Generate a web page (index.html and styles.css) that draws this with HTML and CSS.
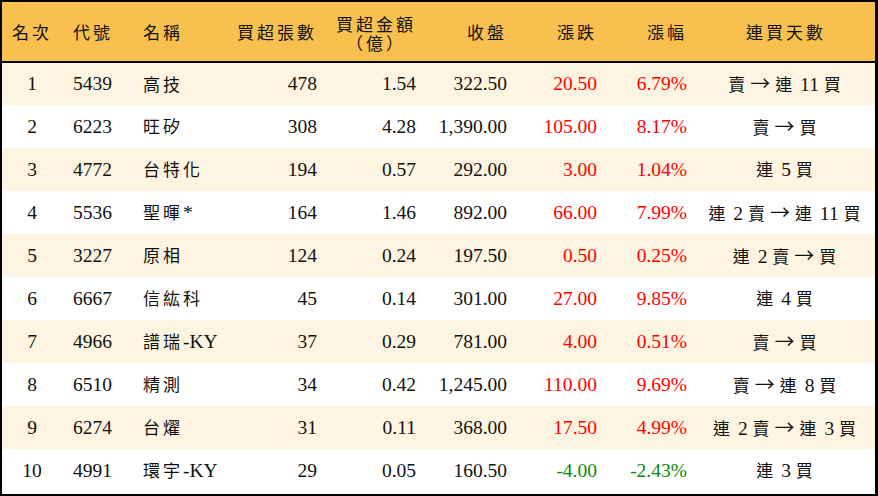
FILE: index.html
```html
<!DOCTYPE html>
<html lang="zh-Hant">
<head>
<meta charset="utf-8">
<title>買超排行</title>
<link rel="stylesheet" href="styles.css">
</head>
<body>
<div class="wrap">
<table class="rank">
<colgroup>
<col class="w1"><col class="w2"><col class="w3"><col class="w4"><col class="w5"><col class="w6"><col class="w7"><col class="w8"><col class="w9">
</colgroup>
<thead>
<tr>
<th class="ctr">名次</th>
<th class="lft">代號</th>
<th class="lft">名稱</th>
<th class="rgt">買超張數</th>
<th class="rgt"><span class="stack"><span class="ln">買超金額</span><span class="ln">（億）</span></span></th>
<th class="rgt">收盤</th>
<th class="rgt">漲跌</th>
<th class="rgt">漲幅</th>
<th class="ctr">連買天數</th>
</tr>
</thead>
<tbody>
<tr><td class="ctr">1</td><td class="lft">5439</td><td class="lft"><span class="z">高技</span></td><td class="rgt">478</td><td class="rgt">1.54</td><td class="rgt">322.50</td><td class="rgt up">20.50</td><td class="rgt up">6.79%</td><td class="ctr"><span class="z">賣</span><span class="arr">→</span><span class="z">連</span> 11 <span class="z">買</span></td></tr>
<tr><td class="ctr">2</td><td class="lft">6223</td><td class="lft"><span class="z">旺矽</span></td><td class="rgt">308</td><td class="rgt">4.28</td><td class="rgt">1,390.00</td><td class="rgt up">105.00</td><td class="rgt up">8.17%</td><td class="ctr"><span class="z">賣</span><span class="arr">→</span><span class="z">買</span></td></tr>
<tr><td class="ctr">3</td><td class="lft">4772</td><td class="lft"><span class="z">台特化</span></td><td class="rgt">194</td><td class="rgt">0.57</td><td class="rgt">292.00</td><td class="rgt up">3.00</td><td class="rgt up">1.04%</td><td class="ctr"><span class="z">連</span> 5 <span class="z">買</span></td></tr>
<tr><td class="ctr">4</td><td class="lft">5536</td><td class="lft"><span class="z">聖暉</span>*</td><td class="rgt">164</td><td class="rgt">1.46</td><td class="rgt">892.00</td><td class="rgt up">66.00</td><td class="rgt up">7.99%</td><td class="ctr"><span class="z">連</span> 2 <span class="z">賣</span><span class="arr">→</span><span class="z">連</span> 11 <span class="z">買</span></td></tr>
<tr><td class="ctr">5</td><td class="lft">3227</td><td class="lft"><span class="z">原相</span></td><td class="rgt">124</td><td class="rgt">0.24</td><td class="rgt">197.50</td><td class="rgt up">0.50</td><td class="rgt up">0.25%</td><td class="ctr"><span class="z">連</span> 2 <span class="z">賣</span><span class="arr">→</span><span class="z">買</span></td></tr>
<tr><td class="ctr">6</td><td class="lft">6667</td><td class="lft"><span class="z">信紘科</span></td><td class="rgt">45</td><td class="rgt">0.14</td><td class="rgt">301.00</td><td class="rgt up">27.00</td><td class="rgt up">9.85%</td><td class="ctr"><span class="z">連</span> 4 <span class="z">買</span></td></tr>
<tr><td class="ctr">7</td><td class="lft">4966</td><td class="lft"><span class="z">譜瑞</span>-KY</td><td class="rgt">37</td><td class="rgt">0.29</td><td class="rgt">781.00</td><td class="rgt up">4.00</td><td class="rgt up">0.51%</td><td class="ctr"><span class="z">賣</span><span class="arr">→</span><span class="z">買</span></td></tr>
<tr><td class="ctr">8</td><td class="lft">6510</td><td class="lft"><span class="z">精測</span></td><td class="rgt">34</td><td class="rgt">0.42</td><td class="rgt">1,245.00</td><td class="rgt up">110.00</td><td class="rgt up">9.69%</td><td class="ctr"><span class="z">賣</span><span class="arr">→</span><span class="z">連</span> 8 <span class="z">買</span></td></tr>
<tr><td class="ctr">9</td><td class="lft">6274</td><td class="lft"><span class="z">台燿</span></td><td class="rgt">31</td><td class="rgt">0.11</td><td class="rgt">368.00</td><td class="rgt up">17.50</td><td class="rgt up">4.99%</td><td class="ctr"><span class="z">連</span> 2 <span class="z">賣</span><span class="arr">→</span><span class="z">連</span> 3 <span class="z">買</span></td></tr>
<tr><td class="ctr">10</td><td class="lft">4991</td><td class="lft"><span class="z">環宇</span>-KY</td><td class="rgt">29</td><td class="rgt">0.05</td><td class="rgt">160.50</td><td class="rgt down">-4.00</td><td class="rgt down">-2.43%</td><td class="ctr"><span class="z">連</span> 3 <span class="z">買</span></td></tr>
</tbody>
</table>
</div>
</body>
</html>
```
FILE: styles.css
```css
html, body {
  margin: 0;
  padding: 0;
  background: #fff;
}

.wrap {
  width: 878px;
  height: 496px;
  box-sizing: border-box;
  border-style: solid;
  border-color: #000;
  border-width: 2px 3px 2px 2px;
  overflow: hidden;
}

.rank {
  width: 873px;
  border-collapse: collapse;
  table-layout: fixed;
  font-family: "Liberation Serif", "Noto Sans CJK TC", serif;
  font-size: 19.5px;
  color: #111;
}

.w1 { width: 60px; }
.w2 { width: 70px; }
.w3 { width: 98px; }
.w4 { width: 97px; }
.w5 { width: 99px; }
.w6 { width: 91px; }
.w7 { width: 90px; }
.w8 { width: 90px; }
.w9 { width: 178px; }

.rank thead tr {
  height: 60px;
  background: #f8c04f;
  border-bottom: 2px solid #000;
}

.rank th {
  font-family: "Noto Sans CJK TC", sans-serif;
  font-weight: normal;
  font-size: 17px;
  letter-spacing: 3px;
  line-height: 20px;
  padding: 0;
  white-space: nowrap;
}

.rank th.rgt {
  padding-right: 7px;
}

.stack {
  display: inline-flex;
  flex-direction: column;
  align-items: center;
  gap: 0;
  padding-top: 2px;
}

.ln {
  display: block;
  height: 19px;
  line-height: 19px;
}

.rank tbody tr {
  height: 43px;
}

.rank tbody tr:nth-child(odd) {
  background: #fdf5e1;
}

.rank td {
  padding: 0;
  white-space: nowrap;
  line-height: 22px;
}

.ctr { text-align: center; }
.lft { text-align: left; padding-left: 11px !important; }
.rgt { text-align: right; padding-right: 10px !important; }

.z {
  font-family: "Noto Sans CJK TC", sans-serif;
  font-size: 17px;
  letter-spacing: 3px;
}

.arr {
  font-family: "Noto Sans CJK TC", sans-serif;
  font-size: 20px;
  margin: 0 5px 0 2px;
}

.up { color: #f00; }
.down { color: #0a8a0a; }
```
